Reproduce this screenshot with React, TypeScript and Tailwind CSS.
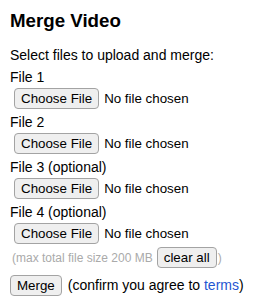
const FILES = ["File 1", "File 2", "File 3 (optional)", "File 4 (optional)"];

function Btn({ children }: { children: React.ReactNode }) {
  return (
    <button
      type="button"
      className="h-[21px] px-[6px] flex items-center rounded-[4px] border border-[#a3a3a3] bg-[#efefef] text-[13.33px] leading-none text-black"
    >
      {children}
    </button>
  );
}

export default function App() {
  return (
    <div
      className="w-[262px] h-[305px] bg-white text-black pl-[10px] pt-[10px]"
      style={{ fontFamily: '"Liberation Sans", Arial, sans-serif' }}
    >
      <h3 className="text-[18.72px] font-bold leading-[21px]">Merge Video</h3>

      <p className="mt-[14px] mb-[2px] text-[14px] leading-5">Select files to upload and merge:</p>

      {FILES.map((label) => (
        <div key={label} className="mb-[3px]">
          <div className="text-[14px] leading-5">{label}</div>
          <div className="mt-[1px] ml-[4px] flex items-center gap-[5px]">
            <Btn>Choose File</Btn>
            <span className="text-[13.33px]">No file chosen</span>
          </div>
        </div>
      ))}

      <div className="mt-[1px] ml-[2px] flex items-center text-[12px] text-[#aaaaaa]">
        <span>(max total file size 200 MB</span>
        <span className="ml-[4px]">
          <Btn>clear all</Btn>
        </span>
        <span className="ml-[1px]">)</span>
      </div>

      <div className="mt-[7px] flex items-center text-[14px]">
        <Btn>Merge</Btn>
        <span className="ml-[6px]">
          (confirm you agree to <a href="#" className="text-[#1f56d1]">terms</a>)
        </span>
      </div>
    </div>
  );
}
